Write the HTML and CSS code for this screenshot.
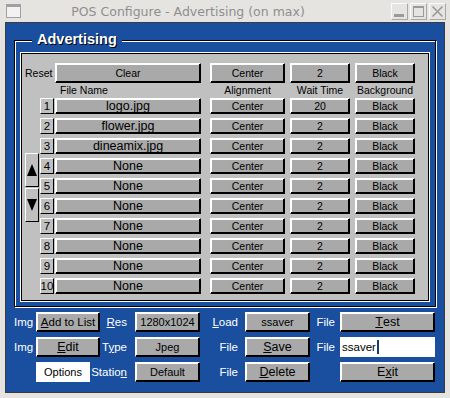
FILE: index.html
```html
<!DOCTYPE html>
<html lang="en">
<head>
    <meta charset="UTF-8">
    <title>POS Configure - Advertising (on max)</title>
    <link rel="stylesheet" href="styles.css">
</head>
<body>
    <div class="window">
        <div class="titlebar">
            <span class="win-icon"></span>
            <span class="title">POS Configure - Advertising (on max)</span>
            <div class="tb-buttons">
                <span class="tb-btn">
                    <svg width="15" height="15" viewBox="0 0 15 15"><rect x="2" y="10" width="10" height="3" fill="#9a9a9a"/></svg>
                </span>
                <span class="tb-btn">
                    <svg width="15" height="15" viewBox="0 0 15 15"><rect x="2.5" y="2.5" width="10" height="10" fill="none" stroke="#9a9a9a"/><rect x="2" y="2" width="11" height="2" fill="#9a9a9a"/></svg>
                </span>
                <span class="tb-btn">
                    <svg width="15" height="15" viewBox="0 0 15 15"><path d="M2.5 2.5 L12.5 12.5 M12.5 2.5 L2.5 12.5" stroke="#9a9a9a" stroke-width="1.6"/></svg>
                </span>
            </div>
        </div>

        <div class="client">
            <div class="frame">
                <div class="frame-title">Advertising</div>
                <div class="panel">
                    <div class="ad-grid">
                        <span class="reset">Reset</span>
                        <div class="btn big c-name">Clear</div>
                        <div class="btn big c-align">Center</div>
                        <div class="btn big c-wait">2</div>
                        <div class="btn big c-bg">Black</div>

                        <span class="hdr c-name hdr-name">File Name</span>
                        <span class="hdr c-align">Alignment</span>
                        <span class="hdr c-wait">Wait Time</span>
                        <span class="hdr c-bg">Background</span>

                        <div class="arrows">
                            <div class="arrow"><svg width="10" height="12" viewBox="0 0 10 12"><path d="M5 0 L10 12 L0 12 Z" fill="#000"/></svg></div>
                            <div class="arrow"><svg width="10" height="12" viewBox="0 0 10 12"><path d="M0 0 L10 0 L5 12 Z" fill="#000"/></svg></div>
                        </div>

                        <div class="num">1</div><div class="btn row name c-name">logo.jpg</div><div class="btn row c-align">Center</div><div class="btn row c-wait">20</div><div class="btn row c-bg">Black</div>
                        <div class="num">2</div><div class="btn row name c-name">flower.jpg</div><div class="btn row c-align">Center</div><div class="btn row c-wait">2</div><div class="btn row c-bg">Black</div>
                        <div class="num">3</div><div class="btn row name c-name">dineamix.jpg</div><div class="btn row c-align">Center</div><div class="btn row c-wait">2</div><div class="btn row c-bg">Black</div>
                        <div class="num">4</div><div class="btn row name c-name">None</div><div class="btn row c-align">Center</div><div class="btn row c-wait">2</div><div class="btn row c-bg">Black</div>
                        <div class="num">5</div><div class="btn row name c-name">None</div><div class="btn row c-align">Center</div><div class="btn row c-wait">2</div><div class="btn row c-bg">Black</div>
                        <div class="num">6</div><div class="btn row name c-name">None</div><div class="btn row c-align">Center</div><div class="btn row c-wait">2</div><div class="btn row c-bg">Black</div>
                        <div class="num">7</div><div class="btn row name c-name">None</div><div class="btn row c-align">Center</div><div class="btn row c-wait">2</div><div class="btn row c-bg">Black</div>
                        <div class="num">8</div><div class="btn row name c-name">None</div><div class="btn row c-align">Center</div><div class="btn row c-wait">2</div><div class="btn row c-bg">Black</div>
                        <div class="num">9</div><div class="btn row name c-name">None</div><div class="btn row c-align">Center</div><div class="btn row c-wait">2</div><div class="btn row c-bg">Black</div>
                        <div class="num">10</div><div class="btn row name c-name">None</div><div class="btn row c-align">Center</div><div class="btn row c-wait">2</div><div class="btn row c-bg">Black</div>
                    </div>
                </div>
            </div>

            <div class="controls">
                <span class="lbl k1">Img</span>
                <div class="btn ctl k2 mid"><u>A</u>dd to List</div>
                <span class="lbl k3"><u>R</u>es</span>
                <div class="btn ctl k4 small">1280x1024</div>
                <span class="lbl k5"><u>L</u>oad</span>
                <div class="btn ctl k6 small">ssaver</div>
                <span class="lbl k7">File</span>
                <div class="btn ctl k8 large"><u>T</u>est</div>

                <span class="lbl k1">Img</span>
                <div class="btn ctl k2 large"><u>E</u>dit</div>
                <span class="lbl k3">T<u>y</u>pe</span>
                <div class="btn ctl k4 small">Jpeg</div>
                <span class="lbl k5">File</span>
                <div class="btn ctl k6 large"><u>S</u>ave</div>
                <span class="lbl k7">File</span>
                <div class="entry k8">ssaver<span class="caret"></span></div>

                <div class="options k2">Options</div>
                <span class="lbl k3">Statio<u>n</u></span>
                <div class="btn ctl k4 small">Default</div>
                <span class="lbl k5">File</span>
                <div class="btn ctl k6 large"><u>D</u>elete</div>
                <div class="btn ctl k8 large">E<u>x</u>it</div>
            </div>
        </div>
    </div>
</body>
</html>
```

FILE: styles.css
```css
/* Old X11 style config window */
body {
    margin: 0;
    padding: 0;
    background: #e6e4e0;
    font-family: 'Liberation Sans', Arial, sans-serif;
    color: #000;
}

.window {
    width: 450px;
    height: 398px;
    background: #e6e4e0;
}

.titlebar {
    height: 22px;
    display: flex;
    align-items: center;
}
.win-icon {
    width: 13px;
    height: 10px;
    margin-left: 6px;
    border: 1px solid #a0a0a0;
    border-top-width: 3px;
    background: #f2f2f2;
}
.title {
    flex: 1;
    text-align: center;
    font-family: 'DejaVu Sans', sans-serif;
    font-size: 12.5px;
    color: #8e8e8e;
    padding-right: 36px;
}
.tb-buttons {
    display: flex;
    gap: 2px;
    margin-right: 4px;
}
.tb-btn {
    width: 15px;
    height: 15px;
    border: 1px solid;
    border-color: #fafafa #a8a8a8 #a8a8a8 #fafafa;
    background: #e6e4e0;
    display: flex;
}

.client {
    margin: 0 5px;
    border: 1px solid #3c3c3c;
    background: #1a4fa0;
    padding: 17px 8px 0 8px;
    box-sizing: border-box;
    height: 371px;
}

.frame {
    position: relative;
    border: 1px solid #000;
    box-shadow: inset 1px 1px 0 #fff, 1px 1px 0 #fff;
    padding: 11px 5px 4px 5px;
}
.frame-title {
    position: absolute;
    top: -10px;
    left: 17px;
    padding: 0 5px;
    background: #1a4fa0;
    color: #fff;
    font-weight: 700;
    font-size: 14.5px;
    line-height: 17px;
    text-shadow: 1px 1px 0 #000;
}

.panel {
    background: #c0c0c0;
    border: 1px solid #fff;
    box-shadow: inset 0 0 0 1px #000;
    padding: 10px 3px 3px 4px;
}

.ad-grid {
    display: grid;
    grid-template-columns: 15px 15px 146px 84px 65px 65px;
    grid-template-rows: 20px 15px repeat(10, 20px);
}

.btn {
    background: #a9a9a9;
    border: 1px solid;
    border-color: #fff #000 #000 #fff;
    box-shadow: inset -1px -1px 0 #000, inset 1px 1px 0 #fff;
    box-sizing: border-box;
    display: flex;
    align-items: center;
    justify-content: center;
    white-space: nowrap;
}
.btn.big {
    height: 20px;
    font-size: 10.5px;
}
.btn.row {
    height: 16px;
    font-size: 10.5px;
    align-self: start;
}
.btn.name {
    font-size: 12.5px;
}

.c-name { grid-column: 3; }
.c-align { grid-column: 4; width: 75px; justify-self: end; }
.c-wait { grid-column: 5; width: 60px; justify-self: end; }
.c-bg { grid-column: 6; width: 60px; justify-self: end; }

.reset {
    grid-column: 1 / 3;
    font-size: 10.5px;
    align-self: center;
}
.hdr {
    font-size: 10.5px;
    text-align: center;
    line-height: 13px;
    align-self: center;
}
.hdr-name {
    text-align: left;
    padding-left: 5px;
}

.num {
    grid-column: 2;
    width: 14px;
    height: 16px;
    box-sizing: border-box;
    border: 1px solid;
    border-color: #fff #000 #000 #fff;
    font-size: 11.5px;
    display: flex;
    align-items: center;
    justify-content: center;
    align-self: start;
}

.arrows {
    grid-column: 1;
    grid-row: 5 / span 5;
    align-self: start;
    margin-top: 15px;
    display: flex;
    flex-direction: column;
    gap: 1px;
}
.arrow {
    width: 14px;
    height: 34px;
    box-sizing: border-box;
    border: 1px solid;
    border-color: #fff #000 #000 #fff;
    display: flex;
    align-items: center;
    justify-content: center;
}

.controls {
    display: grid;
    grid-template-columns: 22px 64px 35px 65px 45px 65px 30px 95px;
    grid-auto-rows: 20px;
    row-gap: 5px;
    margin-top: 5px;
}
.lbl {
    color: #fff;
    font-size: 11.5px;
    align-self: center;
    justify-self: end;
    white-space: nowrap;
}
.k1 { grid-column: 1; justify-self: start; }
.k2 { grid-column: 2; }
.k3 { grid-column: 3; margin-right: 8px; }
.k4 { grid-column: 4; }
.k5 { grid-column: 5; margin-right: 7px; }
.k6 { grid-column: 6; }
.k7 { grid-column: 7; margin-right: 5px; }
.k8 { grid-column: 8; }

.btn.ctl {
    height: 20px;
}
.btn.small { font-size: 11px; }
.btn.mid { font-size: 11.5px; }
.btn.large { font-size: 12.5px; }

.options {
    width: 54px;
    background: #fff;
    font-size: 11px;
    display: flex;
    align-items: center;
    justify-content: center;
}
.entry {
    background: #fff;
    font-size: 11.5px;
    display: flex;
    align-items: center;
    padding-left: 2px;
}
.caret {
    display: inline-block;
    width: 2px;
    height: 14px;
    margin-left: 1px;
    background: #1a3a70;
}
```
